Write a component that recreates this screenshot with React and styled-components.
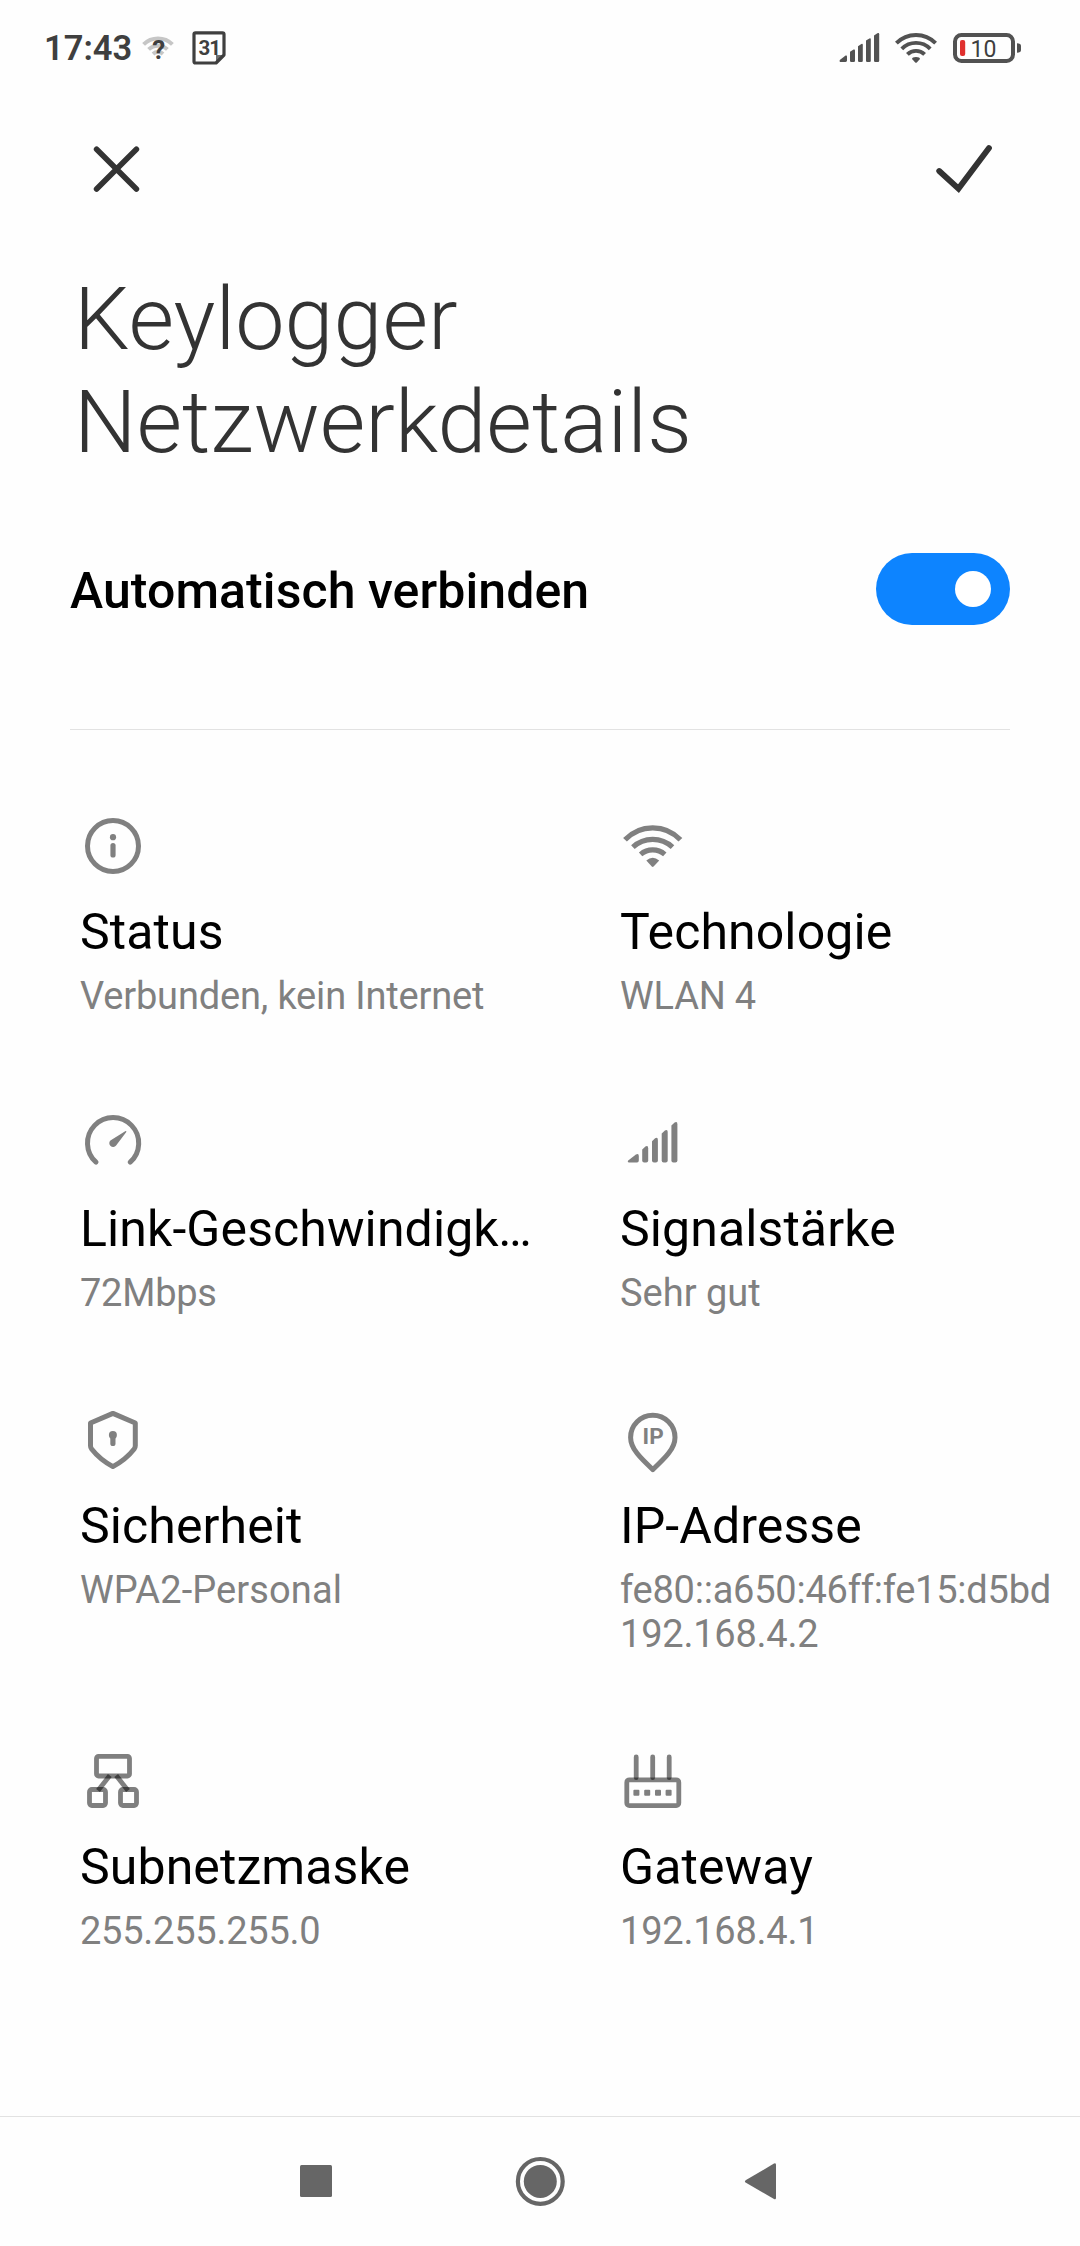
import React from "react";
import styled, { createGlobalStyle } from "styled-components";

const GlobalStyle = createGlobalStyle`
  * { box-sizing: border-box; }
  body { margin: 0; background: #fefefe; font-family: Roboto, "Liberation Sans", sans-serif; }
`;

const Screen = styled.div`
  width: 1080px;
  height: 2246px;
  display: flex;
  flex-direction: column;
  background: #fefefe;
  overflow: hidden;
`;

const StatusBar = styled.header`
  height: 95px;
  padding: 0 58px 0 44px;
  display: flex;
  align-items: center;
  justify-content: space-between;
`;

const StatusGroup = styled.div`
  display: flex;
  align-items: center;
`;

const Clock = styled.span`
  width: 98px;
  font-size: 34.5px;
  line-height: 40px;
  font-weight: 600;
  color: #3f3f3f;
  white-space: nowrap;
`;

const Glyph = styled.svg`
  display: block;
  flex: none;
  width: ${(p) => p.$w}px;
  height: ${(p) => p.$h}px;
  margin-left: ${(p) => p.$gap || 0}px;
  overflow: visible;
`;

const Toolbar = styled.nav`
  height: 148px;
  padding: 0 84px 0 84px;
  display: flex;
  align-items: center;
  justify-content: space-between;
`;

const ToolButton = styled.button`
  width: 66px;
  height: 66px;
  padding: 0;
  border: 0;
  background: none;
`;

const Title = styled.h1`
  margin: 24px 0 0 74px;
  font-size: 88px;
  line-height: 103px;
  font-weight: 300;
  letter-spacing: 0.05px;
  color: #333;
  width: 800px;
`;

const AutoRow = styled.section`
  margin: 80px 70px 0;
  height: 177px;
  border-bottom: 1px solid #e2e2e2;
  display: flex;
  align-items: flex-start;
  justify-content: space-between;
`;

const AutoLabel = styled.span`
  margin-top: 9px;
  font-size: 50px;
  line-height: 58px;
  font-weight: 500;
  letter-spacing: 0.08px;
  color: #000;
`;

const Toggle = styled.button`
  width: 134px;
  height: 72px;
  padding: 0 19px;
  border: 0;
  border-radius: 36px;
  background: #0d84ff;
  display: flex;
  align-items: center;
  justify-content: flex-end;
`;

const Knob = styled.span`
  width: 36px;
  height: 36px;
  border-radius: 50%;
  background: #fff;
`;

const Grid = styled.main`
  flex: 1;
  padding: 83px 0 0 80px;
  display: grid;
  grid-template-columns: 540px 460px;
  grid-auto-rows: max-content;
  row-gap: 92px;
`;

const Cell = styled.article`
  display: flex;
  flex-direction: column;
`;

const Label = styled.h2`
  margin: 24px 0 0;
  width: 454px;
  font-size: 50px;
  line-height: 59px;
  font-weight: 400;
  letter-spacing: 0.1px;
  color: #000;
  white-space: nowrap;
  overflow: hidden;
  text-overflow: ellipsis;
`;

const Value = styled.p`
  margin: 12px 0 0;
  font-size: 38px;
  line-height: 44px;
  letter-spacing: ${(p) => p.$track}px;
  color: #808080;
  white-space: pre;
`;

const NavBar = styled.footer`
  height: 130px;
  border-top: 1px solid #e2e2e2;
  display: flex;
  align-items: center;
  justify-content: center;
  gap: 156px;
`;

const NavButton = styled.button`
  width: 66px;
  height: 66px;
  padding: 0;
  border: 0;
  background: none;
`;

const INK = "#808080";
const HALF = "rgba(0,0,0,0.5)";

const Icon = ({ children }) => (
  <Glyph $w={66} $h={66} viewBox="0 0 66 66" fill="none">
    {children}
  </Glyph>
);

const InfoIcon = () => (
  <Icon>
    <circle cx="33" cy="33" r="25.5" stroke={INK} strokeWidth="5" />
    <circle cx="33" cy="24.2" r="3.1" fill={INK} />
    <path d="M33 32.6V42" stroke={INK} strokeWidth="5.2" strokeLinecap="round" />
  </Icon>
);

const WifiIcon = () => (
  <Icon>
    <g stroke={INK} strokeWidth="5.2">
      <path d="M5 26.8A38 38 0 0 1 60.4 26.8" />
      <path d="M12.9 34.2A29 29 0 0 1 52.5 34.2" />
      <path d="M20.6 41.4A18.6 18.6 0 0 1 44.8 41.4" />
    </g>
    <path d="M26.3 47.6Q32.7 42 39.2 47.6L33.6 53.5Q32.7 54.4 31.8 53.5Z" fill={INK} />
  </Icon>
);

const GaugeIcon = () => (
  <Icon>
    <path d="M16 52.2A25.6 25.6 0 1 1 50.2 52.2" stroke={INK} strokeWidth="5" strokeLinecap="round" />
    <path d="M45.6 20.9Q46.8 20.9 46.3 22L36.1 35.4A3.8 3.8 0 1 1 30.4 30.4Z" fill={INK} />
  </Icon>
);

const SignalIcon = () => (
  <Icon>
    <g fill={INK}>
      <path d="M8.2 50.4L15.9 44.5Q18.8 43 18.8 46V50.5Q18.8 52.4 17 52.4H9Q7 52 8.2 50.4Z" />
      <path d="M22.2 39.4L25.4 36.5Q28.2 35 28.2 38.2V50.4Q28.2 52.4 26.2 52.4H24.2Q22.2 52.4 22.2 50.4Z" />
      <path d="M32 31.2L35.1 28.2Q37.9 26.7 37.9 29.9V50.4Q37.9 52.4 35.9 52.4H34Q32 52.4 32 50.4Z" />
      <path d="M41.7 23.4L44.9 20.4Q47.7 18.9 47.7 22.1V50.4Q47.7 52.4 45.7 52.4H43.7Q41.7 52.4 41.7 50.4Z" />
      <path d="M51.4 15.5L54.6 12.5Q57.4 11 57.4 14.2V50.4Q57.4 52.4 55.4 52.4H53.4Q51.4 52.4 51.4 50.4Z" />
    </g>
  </Icon>
);

const ShieldIcon = () => (
  <Icon>
    <path
      d="M32.9 6.4L55.3 16V38.8Q55.3 40.6 54.2 42Q46 52.5 32.9 59.6Q19.8 52.5 11.6 42Q10.5 40.6 10.5 38.8V16Z"
      stroke={INK}
      strokeWidth="5"
      strokeLinejoin="round"
    />
    <circle cx="32.9" cy="28" r="4" fill={INK} />
    <path d="M32.9 29V36.4" stroke={INK} strokeWidth="5.2" strokeLinecap="round" />
  </Icon>
);

const PinText = styled.text`
  font: 700 22.5px Roboto, sans-serif;
  fill: ${INK};
`;

const IpIcon = () => (
  <Icon>
    <path
      d="M32.8 62.6C20.5 51 10.6 41.7 10.6 30.4A22.2 22.2 0 0 1 55 30.4C55 41.7 45.1 51 32.8 62.6Z"
      stroke={INK}
      strokeWidth="5"
      strokeLinejoin="round"
    />
    <PinText x="22.6" y="37.3">IP</PinText>
  </Icon>
);

const SubnetIcon = () => (
  <Icon>
    <g stroke={HALF} strokeWidth="4.8">
      <rect x="16.5" y="8.4" width="33" height="19.6" rx="2" />
      <rect x="9.5" y="41.5" width="16" height="16" rx="2.4" />
      <rect x="40.5" y="41.5" width="16" height="16" rx="2.4" />
      <path d="M29.8 27.6L18 42.4" />
      <path d="M36.2 27.6L48 42.4" />
    </g>
  </Icon>
);

const GatewayIcon = () => (
  <Icon>
    <g stroke={HALF} strokeWidth="4.8">
      <rect x="6.8" y="31.8" width="52" height="25.8" rx="2.6" />
      <path d="M16.2 9V29.6" strokeLinecap="round" />
      <path d="M32.7 9V29.6" strokeLinecap="round" />
      <path d="M49.2 9V29.6" strokeLinecap="round" />
    </g>
    <g fill={HALF}>
      <rect x="13.4" y="41.7" width="6" height="6" rx="1" />
      <rect x="24.2" y="41.7" width="6" height="6" rx="1" />
      <rect x="35" y="41.7" width="6" height="6" rx="1" />
      <rect x="45.6" y="41.7" width="6" height="6" rx="1" />
    </g>
  </Icon>
);

const QuestionMark = styled.text`
  font: 700 26px Roboto, sans-serif;
  fill: #3f3f3f;
`;
const DayText = styled.text`
  font: 700 20.5px Roboto, sans-serif;
  fill: #3f3f3f;
`;
const BatteryText = styled.text`
  font: 400 23px Roboto, sans-serif;
  fill: #3f3f3f;
`;

const UnknownWifi = () => (
  <Glyph $w={32} $h={30} viewBox="0 0 32 30" fill="none">
    <g stroke="#c6c6c6" strokeWidth="4">
      <path d="M1.6 11.4A20.5 20.5 0 0 1 30.4 11.4" />
      <path d="M6.6 16.4A13.6 13.6 0 0 1 25.4 16.4" />
      <path d="M11 21A7.4 7.4 0 0 1 21 21" />
    </g>
    <QuestionMark x="10.2" y="26.4">?</QuestionMark>
  </Glyph>
);

const CalendarBadge = () => (
  <Glyph $w={34} $h={34} $gap={18} viewBox="0 0 34 34" fill="none">
    <path
      d="M3.5 1.8H30.5Q32 1.8 32 3.3V24L24 32H3.5Q2 32 2 30.5V3.3Q2 1.8 3.5 1.8Z"
      stroke="#3f3f3f"
      strokeWidth="3.2"
      strokeLinejoin="round"
    />
    <path d="M32 24L24 32V24Z" fill="#3f3f3f" opacity=".75" />
    <DayText x="6.4" y="23.8" letterSpacing="-1">31</DayText>
  </Glyph>
);

const StatusSignal = () => (
  <Glyph $w={41} $h={30} viewBox="0 0 41 30">
    <g fill="#525252">
      <path d="M0.8 27L6.6 22.6Q8 22 8 23.4V27.6Q8 29 6.6 29H1.2Q0 28.6 0.8 27Z" />
      <path d="M11 18.8L14.6 16.6Q16 16 16 17.6V27.8Q16 29 14.8 29H12.2Q11 29 11 27.8Z" />
      <path d="M19 13.2L22.4 11Q23.8 10.4 23.8 12V27.8Q23.8 29 22.6 29H20.2Q19 29 19 27.8Z" />
      <path d="M27 7.6L30.4 5.4Q31.8 4.8 31.8 6.4V27.8Q31.8 29 30.6 29H28.2Q27 29 27 27.8Z" />
      <path d="M35 2.4L38.8 0.1Q40.2 -0.4 40.2 1.2V27.8Q40.2 29 39 29H36.2Q35 29 35 27.8Z" />
    </g>
  </Glyph>
);

const StatusWifi = () => (
  <Glyph $w={42} $h={30} $gap={15} viewBox="0 0 42 30" fill="none">
    <g stroke="#525252" strokeWidth="3.9">
      <path d="M1.4 10.2A27.5 27.5 0 0 1 40.6 10.2" />
      <path d="M6.8 15.8A20 20 0 0 1 35.2 15.8" />
      <path d="M12.4 21.4A12.2 12.2 0 0 1 29.6 21.4" />
    </g>
    <path d="M17 26Q17 24 21 24Q25 24 25 26L22 29.2Q21 30.2 20 29.2Z" fill="#525252" />
  </Glyph>
);

const Battery = () => (
  <Glyph $w={69} $h={30} $gap={16} viewBox="0 0 69 30" fill="none">
    <rect x="2" y="2" width="58" height="26" rx="6.5" stroke="#525252" strokeWidth="4" />
    <path d="M64 10.2Q68 10.2 68 13V17Q68 19.8 64 19.8Z" fill="#525252" />
    <rect x="7" y="7" width="5.2" height="16" rx="2" fill="#e0302e" />
    <BatteryText x="17.6" y="24">10</BatteryText>
  </Glyph>
);

const DETAILS = [
  { icon: InfoIcon, label: "Status", value: "Verbunden, kein Internet", track: -0.16 },
  { icon: WifiIcon, label: "Technologie", value: "WLAN 4", track: -0.2 },
  { icon: GaugeIcon, label: "Link-Geschwindigkeit", value: "72Mbps", track: -0.25 },
  { icon: SignalIcon, label: "Signalstärke", value: "Sehr gut", track: 0 },
  { icon: ShieldIcon, label: "Sicherheit", value: "WPA2-Personal", track: 0.1 },
  { icon: IpIcon, label: "IP-Adresse", value: "fe80::a650:46ff:fe15:d5bd\n192.168.4.2", track: -0.23 },
  { icon: SubnetIcon, label: "Subnetzmaske", value: "255.255.255.0", track: -0.25 },
  { icon: GatewayIcon, label: "Gateway", value: "192.168.4.1", track: -0.23 },
];

export default function App() {
  return (
    <Screen>
      <GlobalStyle />
      <StatusBar>
        <StatusGroup>
          <Clock>17:43</Clock>
          <UnknownWifi />
          <CalendarBadge />
        </StatusGroup>
        <StatusGroup>
          <StatusSignal />
          <StatusWifi />
          <Battery />
        </StatusGroup>
      </StatusBar>
      <Toolbar>
        <ToolButton aria-label="Abbrechen">
          <Glyph $w={66} $h={66} viewBox="0 0 66 66">
            <path d="M12.6 13.2L52.4 53M52.4 13.2L12.6 53" stroke="#333" strokeWidth="5.6" strokeLinecap="round" />
          </Glyph>
        </ToolButton>
        <ToolButton aria-label="Speichern">
          <Glyph $w={66} $h={66} viewBox="0 0 66 66" fill="none">
            <path d="M9.2 35L28.5 52.6L59 12" stroke="#333" strokeWidth="5.8" strokeLinecap="round" />
          </Glyph>
        </ToolButton>
      </Toolbar>
      <Title>Keylogger Netzwerkdetails</Title>
      <AutoRow>
        <AutoLabel>Automatisch verbinden</AutoLabel>
        <Toggle aria-label="Automatisch verbinden">
          <Knob />
        </Toggle>
      </AutoRow>
      <Grid>
        {DETAILS.map(({ icon: DetailIcon, label, value, track }) => (
          <Cell key={label}>
            <DetailIcon />
            <Label>{label}</Label>
            <Value $track={track}>{value}</Value>
          </Cell>
        ))}
      </Grid>
      <NavBar>
        <NavButton aria-label="Letzte Apps">
          <Glyph $w={66} $h={66} viewBox="0 0 66 66">
            <rect x="15" y="16" width="32" height="32" rx="1.5" fill="#666" />
          </Glyph>
        </NavButton>
        <NavButton aria-label="Startseite">
          <Glyph $w={66} $h={66} viewBox="0 0 66 66">
            <circle cx="33.3" cy="32.4" r="22.4" fill="none" stroke="#666" strokeWidth="4.2" />
            <circle cx="33.3" cy="32.4" r="16.5" fill="#666" />
          </Glyph>
        </NavButton>
        <NavButton aria-label="Zurück">
          <Glyph $w={66} $h={66} viewBox="0 0 66 66">
            <path d="M17 31L45 14.6Q47 13.6 47 15.8V48.8Q47 51 45 50L17 33.8Q14.8 32.4 17 31Z" fill="#666" />
          </Glyph>
        </NavButton>
      </NavBar>
    </Screen>
  );
}
